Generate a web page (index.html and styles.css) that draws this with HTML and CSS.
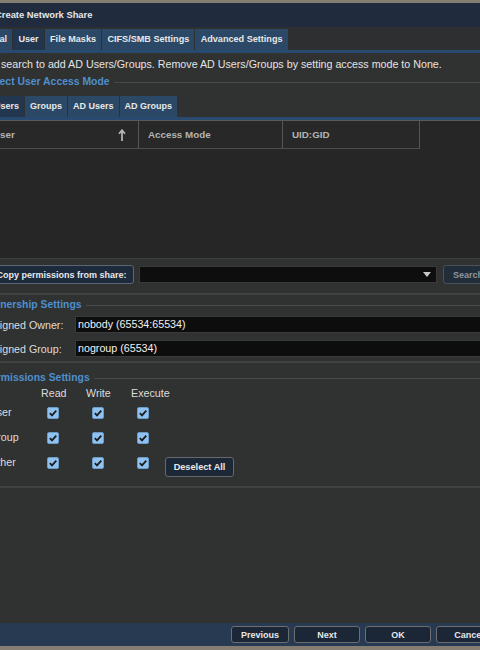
FILE: index.html
```html
<!DOCTYPE html>
<html lang="en">
<head>
    <meta charset="UTF-8">
    <meta name="viewport" content="width=device-width, initial-scale=1.0">
    <title>Create Network Share</title>
    <link rel="stylesheet" href="styles.css">
</head>
<body>
    <div class="dialog">
        <div class="titlebar">Create Network Share</div>

        <div class="tabs main-tabs">
            <span class="tab">General</span>
            <span class="tab active">User</span>
            <span class="tab">File Masks</span>
            <span class="tab">CIFS/SMB Settings</span>
            <span class="tab">Advanced Settings</span>
        </div>

        <div class="content">
            <p class="hint">Use search to add AD Users/Groups. Remove AD Users/Groups by setting access mode to None.</p>

            <div class="group access">
                <div class="legend">Select User Access Mode</div>
                <div class="tabs sub-tabs">
                    <span class="tab active">Users</span>
                    <span class="tab">Groups</span>
                    <span class="tab">AD Users</span>
                    <span class="tab">AD Groups</span>
                </div>
                <div class="grid">
                    <div class="grid-head">
                        <div class="col col-user">User
                            <svg class="sort" width="8" height="12" viewBox="0 0 8 12"><path d="M4 1.5V12M1 4.8L4 1.2L7 4.8" fill="none" stroke="#b8b8b8" stroke-width="1.7"/></svg>
                        </div>
                        <div class="col col-mode">Access Mode</div>
                        <div class="col col-uid">UID:GID</div>
                    </div>
                    <div class="grid-body"></div>
                </div>
                <div class="copy-row">
                    <button class="btn copy-btn">Copy permissions from share:</button>
                    <div class="combo">
                        <svg class="combo-arrow" width="8" height="5" viewBox="0 0 8 5"><path d="M0 0H8L4 5Z" fill="#c8c8c8"/></svg>
                    </div>
                    <button class="btn search-btn">Search</button>
                </div>
            </div>

            <div class="group owner">
                <div class="legend">Ownership Settings</div>
                <div class="field">
                    <label>Assigned Owner:</label>
                    <div class="input">nobody (65534:65534)</div>
                </div>
                <div class="field">
                    <label>Assigned Group:</label>
                    <div class="input">nogroup (65534)</div>
                </div>
            </div>

            <div class="group perms">
                <div class="legend">Permissions Settings</div>
                <div class="perm-grid">
                    <span></span>
                    <span class="perm-head">Read</span>
                    <span class="perm-head">Write</span>
                    <span class="perm-head">Execute</span>
                    <span></span>

                    <span class="perm-label">User</span>
                    <span class="cell"><span class="cb"><svg width="12" height="12" viewBox="0 0 12 12"><path d="M2.8 6.2L5 8.4L9.3 3.6" fill="none" stroke="#1d1d1d" stroke-width="1.8"/></svg></span></span>
                    <span class="cell"><span class="cb"><svg width="12" height="12" viewBox="0 0 12 12"><path d="M2.8 6.2L5 8.4L9.3 3.6" fill="none" stroke="#1d1d1d" stroke-width="1.8"/></svg></span></span>
                    <span class="cell"><span class="cb"><svg width="12" height="12" viewBox="0 0 12 12"><path d="M2.8 6.2L5 8.4L9.3 3.6" fill="none" stroke="#1d1d1d" stroke-width="1.8"/></svg></span></span>
                    <span></span>

                    <span class="perm-label">Group</span>
                    <span class="cell"><span class="cb"><svg width="12" height="12" viewBox="0 0 12 12"><path d="M2.8 6.2L5 8.4L9.3 3.6" fill="none" stroke="#1d1d1d" stroke-width="1.8"/></svg></span></span>
                    <span class="cell"><span class="cb"><svg width="12" height="12" viewBox="0 0 12 12"><path d="M2.8 6.2L5 8.4L9.3 3.6" fill="none" stroke="#1d1d1d" stroke-width="1.8"/></svg></span></span>
                    <span class="cell"><span class="cb"><svg width="12" height="12" viewBox="0 0 12 12"><path d="M2.8 6.2L5 8.4L9.3 3.6" fill="none" stroke="#1d1d1d" stroke-width="1.8"/></svg></span></span>
                    <span></span>

                    <span class="perm-label">Other</span>
                    <span class="cell"><span class="cb"><svg width="12" height="12" viewBox="0 0 12 12"><path d="M2.8 6.2L5 8.4L9.3 3.6" fill="none" stroke="#1d1d1d" stroke-width="1.8"/></svg></span></span>
                    <span class="cell"><span class="cb"><svg width="12" height="12" viewBox="0 0 12 12"><path d="M2.8 6.2L5 8.4L9.3 3.6" fill="none" stroke="#1d1d1d" stroke-width="1.8"/></svg></span></span>
                    <span class="cell"><span class="cb"><svg width="12" height="12" viewBox="0 0 12 12"><path d="M2.8 6.2L5 8.4L9.3 3.6" fill="none" stroke="#1d1d1d" stroke-width="1.8"/></svg></span></span>
                    <span class="cell"><button class="btn deselect-btn">Deselect All</button></span>
                </div>
            </div>
        </div>

        <div class="footer">
            <button class="btn foot-btn">Previous</button>
            <button class="btn foot-btn">Next</button>
            <button class="btn foot-btn">OK</button>
            <button class="btn foot-btn">Cancel</button>
        </div>
    </div>
</body>
</html>
```

FILE: styles.css
```css
html, body {
    margin: 0;
    padding: 0;
    height: 100%;
    overflow: hidden;
}
body {
    background-color: #877e73;
    font-family: 'Liberation Sans', Arial, sans-serif;
    color: #e4e4e4;
}
.dialog {
    margin: 3px 0 0 -32px;
    width: 538px;
    height: 643px;
    background-color: #303131;
    display: flex;
    flex-direction: column;
}
.titlebar {
    height: 24px;
    line-height: 24px;
    padding-left: 27px;
    background-color: #202c3e;
    font-size: 9.4px;
    font-weight: bold;
    color: #e6e6e6;
}

/* tabs */
.tabs {
    display: flex;
    gap: 1px;
    border-bottom: 3px solid #284a70;
    background-color: #2e2f30;
}
.main-tabs {
    padding-top: 2px;
}
.tab {
    height: 21px;
    line-height: 21px;
    padding: 0 5px;
    background-color: #2b4866;
    font-size: 9px;
    font-weight: bold;
    color: #e8e8e8;
    white-space: nowrap;
}
.main-tabs .tab {
    padding: 0 5.2px;
    font-size: 9.1px;
}
.tab.active {
    background-color: #233650;
}
.sub-tabs {
    margin: 7px 0 0 21px;
    background-color: #303131;
}

.content {
    flex: 1;
    padding-top: 4px;
}
.hint {
    margin: 0;
    padding-left: 11px;
    line-height: 14px;
    font-size: 10.7px;
    white-space: nowrap;
}

.group {
    border-bottom: 2px solid #404141;
}
.legend {
    display: flex;
    align-items: center;
    padding-left: 16px;
    line-height: 14px;
    font-size: 10.4px;
    font-weight: bold;
    color: #4d8fcf;
    white-space: nowrap;
}
.legend::after {
    content: "";
    flex: 1;
    margin-left: 4px;
    border-top: 1px solid #474848;
}
.access {
    margin-top: 4px;
    padding-bottom: 9px;
}
.access .sub-tabs {
    margin-left: 21px;
}

/* grid */
.grid {
    margin-left: 11px;
    border-top: 1px solid #5a5a5a;
    border-bottom: 1px solid #3e3e3e;
}
.grid-head {
    display: flex;
    height: 28px;
    background-color: #282828;
}
.col {
    display: flex;
    align-items: center;
    box-sizing: border-box;
    padding-left: 9px;
    border-right: 1px solid #555;
    border-bottom: 1px solid #4e4e4e;
    font-size: 9.8px;
    font-weight: bold;
    color: #b4b4b4;
}
.col-user {
    width: 160px;
    padding-left: 14px;
}
.col-mode {
    width: 144px;
}
.col-uid {
    width: 137px;
}
.sort {
    margin-left: auto;
    margin-right: 12px;
}
.grid-head::after {
    content: "";
    flex: 1;
    background-color: #262626;
}
.grid-body {
    height: 109px;
    background-color: #262626;
}

/* buttons */
.btn {
    box-sizing: border-box;
    font-family: 'Liberation Sans', Arial, sans-serif;
    font-size: 9px;
    font-weight: bold;
    color: #e8e8e8;
    background-color: #1c2838;
    border: 1px solid #66696d;
    border-radius: 3px;
    padding: 0 8px;
    white-space: nowrap;
}
.copy-row {
    display: flex;
    align-items: center;
    margin-top: 6px;
    padding-left: 21px;
    height: 19px;
}
.copy-btn {
    width: 145px;
    height: 19px;
    padding: 0;
    background-color: #1d2a3b;
    border-color: #5c6775;
}
.combo {
    box-sizing: border-box;
    width: 298px;
    height: 17px;
    margin-left: 5px;
    background-color: #0e0e0e;
    border: 1px solid #3a3a3a;
    display: flex;
    align-items: center;
    justify-content: flex-end;
    padding-right: 5px;
}
.search-btn {
    margin-left: 6px;
    height: 19px;
    width: 52px;
    padding: 0 0 0 9px;
    text-align: left;
    color: #8e959d;
    background-color: #222d3a;
    border-color: #4c5157;
}

/* ownership */
.owner {
    padding-top: 3px;
    padding-bottom: 4px;
}
.field {
    display: flex;
    align-items: center;
    margin-top: 4px;
    height: 17px;
}
.field + .field {
    margin-top: 7px;
}
.field label {
    width: 93px;
    padding-left: 14px;
    font-size: 10.7px;
    color: #dcdcdc;
}
.input {
    box-sizing: border-box;
    flex: 1;
    height: 17px;
    line-height: 15px;
    margin-right: 10px;
    padding-left: 2px;
    background-color: #0d0d0d;
    border: 1px solid #3a3a3a;
    font-size: 10.7px;
    color: #f2f2f2;
}

/* permissions */
.perms {
    padding-top: 8px;
    padding-bottom: 11px;
}
.perm-grid {
    display: grid;
    grid-template-columns: 73px 45px 45px 34px auto;
    grid-template-rows: 14px 25px 25px 25px;
    margin-top: 1px;
    font-size: 10.7px;
    color: #dcdcdc;
}
.perm-head {
    line-height: 14px;
    white-space: nowrap;
}
.perm-label {
    padding-left: 21px;
    line-height: 25px;
}
.cell {
    display: flex;
    align-items: center;
}
.cb {
    box-sizing: border-box;
    width: 12px;
    height: 12px;
    margin-left: 6px;
    background-color: #8fc2f0;
    border: 1px solid #6b9bc7;
    border-radius: 2px;
    display: flex;
}
.cb svg {
    margin: -1px;
}
.deselect-btn {
    align-self: flex-start;
    margin-top: 7px;
    width: 69px;
    height: 20px;
    padding: 0;
    font-size: 9.2px;
}

/* footer */
.footer {
    height: 23px;
    box-sizing: border-box;
    padding: 3px 4px 0 0;
    display: flex;
    justify-content: flex-end;
    gap: 5px;
    background-color: #283a52;
}
.foot-btn {
    height: 17px;
    min-width: 66px;
    padding: 0 9px;
    background-color: #1b2636;
    border-color: #6d6e70;
}
.foot-btn:first-child {
    min-width: 0;
}
```
